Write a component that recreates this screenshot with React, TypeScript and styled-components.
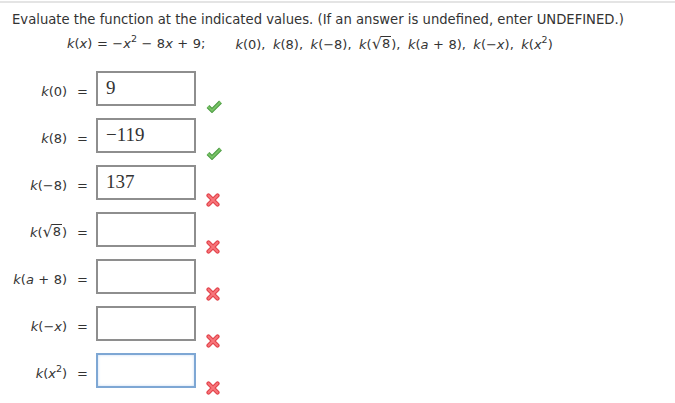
import React from "react";
import styled, { createGlobalStyle } from "styled-components";

const Global = createGlobalStyle`
  body {
    margin: 0;
    background: #fff;
    color: #333;
    font-family: "DejaVu Sans", Verdana, sans-serif;
  }
`;

type Mark = "ok" | "bad";

export default function App() {
  const items = [
    { label: <>(0)</>, value: "9", mark: "ok" as Mark },
    { label: <>(8)</>, value: "\u2212119", mark: "ok" as Mark },
    { label: <>(−8)</>, value: "137", mark: "bad" as Mark },
    { label: <>(<Root>8</Root>)</>, value: "", mark: "bad" as Mark },
    { label: <>(<V>a</V><Op>+</Op>8)</>, value: "", mark: "bad" as Mark },
    { label: <>(−<V>x</V>)</>, value: "", mark: "bad" as Mark },
    { label: <>(<V>x</V><Sup>2</Sup>)</>, value: "", mark: "bad" as Mark, focused: true },
  ];

  return (
    <Page>
      <Global />
      <Intro>Evaluate the function at the indicated values. (If an answer is undefined, enter UNDEFINED.)</Intro>
      <Formula>
        <span>
          <V>k</V>(<V>x</V>)<Op>=</Op>−<V>x</V><Sup>2</Sup><Op>−</Op>8<V>x</V><Op>+</Op>9;
        </span>
        <span>
          <V>k</V>(0)<Comma>,</Comma><V>k</V>(8)<Comma>,</Comma><V>k</V>(−8)<Comma>,</Comma>
          <V>k</V>(<Root>8</Root>)<Comma>,</Comma><V>k</V>(<V>a</V><Op>+</Op>8)<Comma>,</Comma>
          <V>k</V>(−<V>x</V>)<Comma>,</Comma><V>k</V>(<V>x</V><Sup>2</Sup>)
        </span>
      </Formula>
      <Answers>
        {items.map((r, i) => (
          <Row key={i}>
            <Label>
              <V>k</V>{r.label}<Eq>=</Eq>
            </Label>
            <Box $focused={r.focused}>{r.value}</Box>
            <Icon $mark={r.mark}>{r.mark === "ok" ? <Check /> : <Cross />}</Icon>
          </Row>
        ))}
      </Answers>
    </Page>
  );
}

function Root({ children }: { children: React.ReactNode }) {
  return (
    <RootWrap>
      <RadSign>√</RadSign>
      <Radicand>{children}</Radicand>
    </RootWrap>
  );
}

function Check() {
  return (
    <svg width="16" height="13" viewBox="0 0 16 13">
      <path d="M2 6.5 L6 10.5 L14.5 2" fill="none" stroke="#4a9a40" strokeWidth="4" />
      <path d="M2 6.5 L6 10.5 L14.5 2" fill="none" stroke="#78c266" strokeWidth="2" />
    </svg>
  );
}

function Cross() {
  return (
    <svg width="14" height="14" viewBox="0 0 14 14">
      <path d="M2.5 2.5 L11.5 11.5 M11.5 2.5 L2.5 11.5" stroke="#e2444c" strokeWidth="4.2" strokeLinecap="round" />
      <path d="M2.5 2.5 L11.5 11.5 M11.5 2.5 L2.5 11.5" stroke="#f8767b" strokeWidth="1.8" strokeLinecap="round" />
    </svg>
  );
}

const Page = styled.div`
  margin-top: 1px;
  border-top: 2px solid #e4e4e4;
  padding: 9px 0 0 12px;
`;

const Intro = styled.div`
  font-size: 13.2px;
  line-height: 16px;
  white-space: nowrap;
`;

const Formula = styled.div`
  display: flex;
  gap: 30px;
  margin-top: 8px;
  padding-left: 55px;
  font-size: 13px;
  line-height: 16px;
  white-space: nowrap;
`;

const V = styled.i`
  font-style: italic;
`;

const Op = styled.span`
  margin: 0 4.5px;
`;

const Comma = styled.span`
  margin-right: 7.5px;
`;

const Sup = styled.sup`
  font-size: 9.5px;
  vertical-align: 6px;
  line-height: 0;
`;

const RootWrap = styled.span`
  display: inline-flex;
  align-items: flex-end;
`;

const RadSign = styled.span`
  font-size: 16px;
  line-height: 15px;
  margin-right: -1px;
`;

const Radicand = styled.span`
  border-top: 1px solid #333;
  line-height: 14px;
  padding: 0 1px;
`;

const Answers = styled.div`
  display: flex;
  flex-direction: column;
  gap: 5px;
  margin-top: 18px;
  margin-left: -12px;
`;

const Row = styled.div`
  display: flex;
  align-items: flex-start;
  height: 42px;
`;

const Label = styled.div`
  width: 88px;
  margin-right: 8px;
  padding-top: 3px;
  line-height: 35px;
  height: 35px;
  box-sizing: border-box;
  text-align: right;
  font-size: 13px;
  white-space: nowrap;
`;

const Eq = styled.span`
  margin-left: 10px;
`;

const Box = styled.div<{ $focused?: boolean }>`
  width: 100px;
  height: 35px;
  box-sizing: border-box;
  padding: 0 8px;
  border: 2px solid ${(p) => (p.$focused ? "#7ea7d4" : "#8e8e8e")};
  box-shadow: ${(p) => (p.$focused ? "inset 0 0 3px #c5dbf2" : "none")};
  font-family: "Liberation Serif", "Times New Roman", serif;
  font-size: 19px;
  line-height: 29px;
  color: #333;
`;

const Icon = styled.div<{ $mark: Mark }>`
  margin-left: 10px;
  margin-top: ${(p) => (p.$mark === "ok" ? "29px" : "28px")};
  display: flex;
`;
